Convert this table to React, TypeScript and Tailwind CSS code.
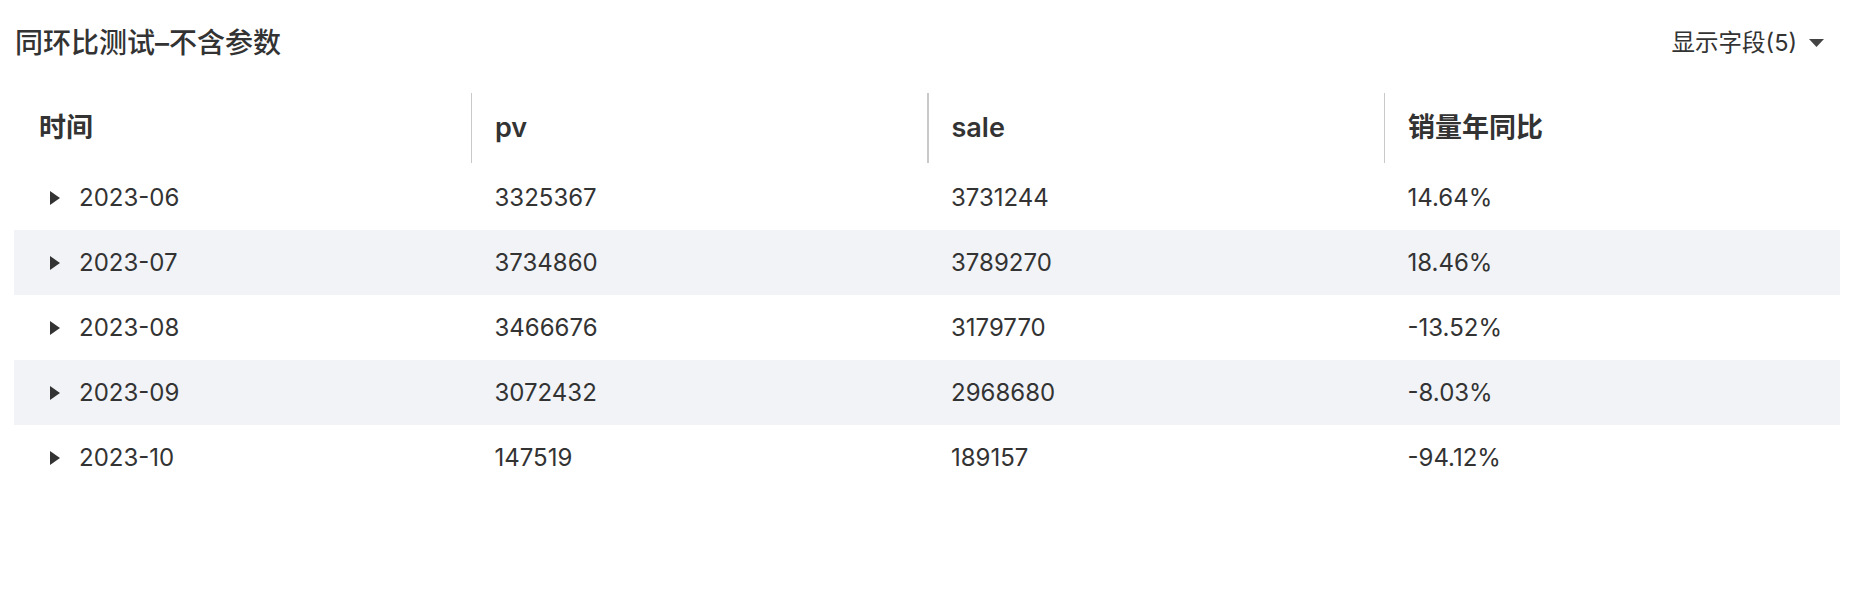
const columns = ['时间', 'pv', 'sale', '销量年同比'];

const rows = [
  { month: '2023-06', pv: '3325367', sale: '3731244', yoy: '14.64%' },
  { month: '2023-07', pv: '3734860', sale: '3789270', yoy: '18.46%' },
  { month: '2023-08', pv: '3466676', sale: '3179770', yoy: '-13.52%' },
  { month: '2023-09', pv: '3072432', sale: '2968680', yoy: '-8.03%' },
  { month: '2023-10', pv: '147519', sale: '189157', yoy: '-94.12%' },
];

function CaretRight() {
  return (
    <svg width="10" height="14" viewBox="0 0 10 14" className="shrink-0">
      <path d="M0 0 L10 7 L0 14 Z" fill="#333333" />
    </svg>
  );
}

function CaretDown() {
  return (
    <svg width="15" height="8" viewBox="0 0 15 8" className="shrink-0">
      <path d="M0 0 L15 0 L7.5 8 Z" fill="#444444" />
    </svg>
  );
}

export default function App() {
  return (
    <div
      className="min-h-screen bg-white pl-[14px] pr-[16px] text-[#333333]"
      style={{ fontFamily: "Inter, 'Noto Sans CJK SC', sans-serif" }}
    >
      <div className="flex h-[86px] items-center justify-between">
        <h1 className="pl-[1px] text-[28px] font-medium text-[#333333]">
          同环比测试–不含参数
        </h1>
        <button className="flex items-center gap-[12px] pr-[16px] text-[23.5px] text-[#333333]">
          <span>显示字段(5)</span>
          <CaretDown />
        </button>
      </div>

      <div className="grid h-[79px] grid-cols-4 pt-[5px]">
        {columns.map((col, i) => (
          <div key={col} className="flex items-center">
            {i > 0 && <span className="h-[70px] w-[1.5px] shrink-0 bg-[#c9c9c9]" />}
            <span
              className={
                i === 0
                  ? 'pl-[25px] text-[27px] font-semibold'
                  : 'pl-[23px] text-[27px] font-semibold'
              }
            >
              {col}
            </span>
          </div>
        ))}
      </div>

      <div>
        {rows.map((row, i) => (
          <div
            key={row.month}
            className={
              i % 2 === 1
                ? 'grid h-[65px] grid-cols-4 items-center bg-[#f2f3f7] text-[24px]'
                : 'grid h-[65px] grid-cols-4 items-center text-[24px]'
            }
          >
            <div className="flex items-center gap-[19px] pl-[36px]">
              <CaretRight />
              <span>{row.month}</span>
            </div>
            <div className="pl-[24px]">{row.pv}</div>
            <div className="pl-[24px]">{row.sale}</div>
            <div className="pl-[24px]">{row.yoy}</div>
          </div>
        ))}
      </div>
    </div>
  );
}
